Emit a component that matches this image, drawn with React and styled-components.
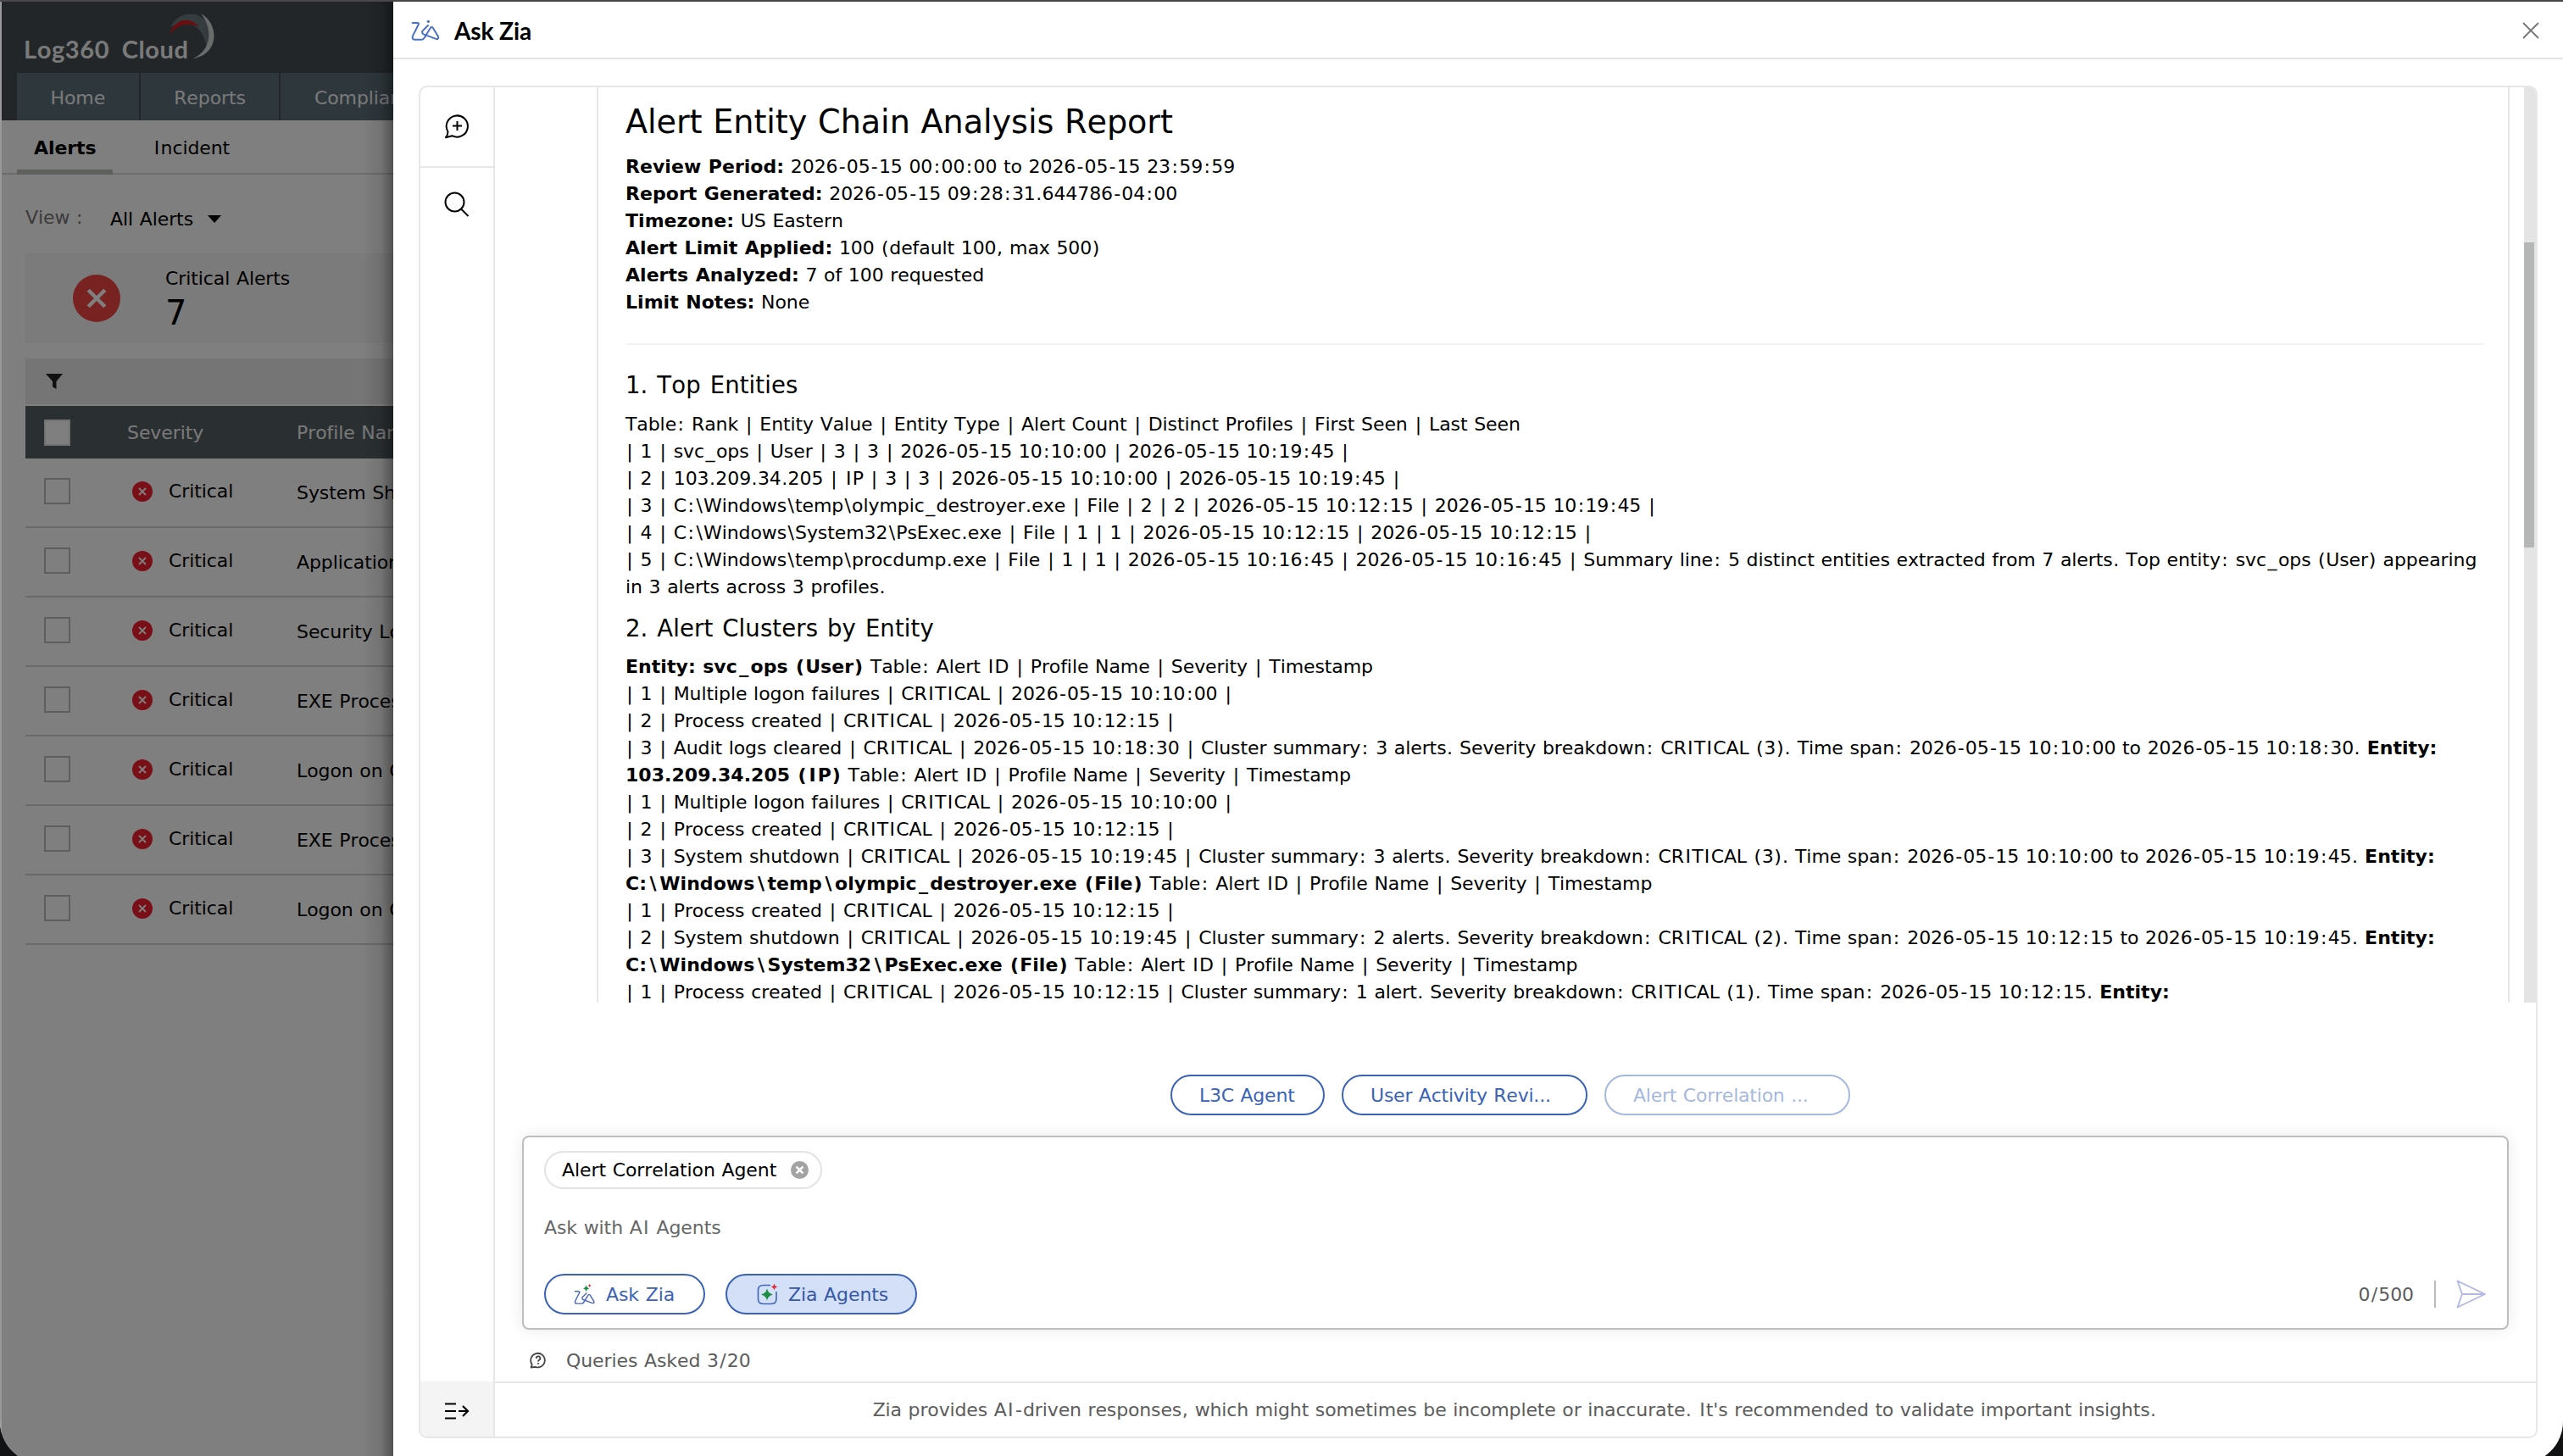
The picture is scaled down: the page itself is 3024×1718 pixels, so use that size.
import React from "react";
import styled, { createGlobalStyle } from "styled-components";

const GlobalStyle = createGlobalStyle`
  * {
    box-sizing: border-box;
  }
  body {
    margin: 0;
    background: #111214;
    font-family: "DejaVu Sans", Verdana, sans-serif;
    font-size: 22px;
    font-kerning: none;
    letter-spacing: -0.004em;
    word-spacing: 0.036em;
    color: #000;
  }
  h1, h2, p {
    margin: 0;
    font-weight: 400;
  }
  svg {
    display: block;
    flex: none;
  }
`;

/* narrow punctuation gets some air on both sides */
const PADS = { "|": 0.058, ":": 0.066, "\\": 0.058, "/": 0.058, "-": 0.056, "(": 0.032, ")": 0.032, ".": 0.022, ",": 0.022, _: 0.068, I: 0.062 };
const BOLD_PADS = { "\\": 0.162, "(": 0.045, ")": 0.045, _: 0.105, I: 0.085 };

const Glyph = styled.span`
  padding: 0 ${p => p.$pad}em;
`;

const T = ({ children, pads = PADS }) =>
  children.split(/([|:\\/\-().,_I])/).map((part, index) => {
    if (pads[part]) {
      return <Glyph key={index} $pad={pads[part]}>{part}</Glyph>;
    }
    return part;
  });

const alerts = [
  "System Shutdown",
  "Application Crash",
  "Security Logs Cleared",
  "EXE Process Created",
  "Logon on Critical Host",
  "EXE Process Created",
  "Logon on Critical Host",
];

const summary = [
  ["Review Period:", " 2026-05-15 00:00:00 to 2026-05-15 23:59:59"],
  ["Report Generated:", " 2026-05-15 09:28:31.644786-04:00"],
  ["Timezone:", " US Eastern"],
  ["Alert Limit Applied:", " 100 (default 100, max 500)"],
  ["Alerts Analyzed:", " 7 of 100 requested"],
  ["Limit Notes:", " None"],
];

const entities = [
  "Table: Rank | Entity Value | Entity Type | Alert Count | Distinct Profiles | First Seen | Last Seen",
  "| 1 | svc_ops | User | 3 | 3 | 2026-05-15 10:10:00 | 2026-05-15 10:19:45 |",
  "| 2 | 103.209.34.205 | IP | 3 | 3 | 2026-05-15 10:10:00 | 2026-05-15 10:19:45 |",
  "| 3 | C:\\Windows\\temp\\olympic_destroyer.exe | File | 2 | 2 | 2026-05-15 10:12:15 | 2026-05-15 10:19:45 |",
  "| 4 | C:\\Windows\\System32\\PsExec.exe | File | 1 | 1 | 2026-05-15 10:12:15 | 2026-05-15 10:12:15 |",
  "| 5 | C:\\Windows\\temp\\procdump.exe | File | 1 | 1 | 2026-05-15 10:16:45 | 2026-05-15 10:16:45 | Summary line: 5 distinct entities extracted from 7 alerts. Top entity: svc_ops (User) appearing",
  "in 3 alerts across 3 profiles.",
];

const HEAD = " Table: Alert ID | Profile Name | Severity | Timestamp";

const clusters = [
  { lead: "Entity: svc_ops (User)", text: HEAD },
  { text: "| 1 | Multiple logon failures | CRITICAL | 2026-05-15 10:10:00 |" },
  { text: "| 2 | Process created | CRITICAL | 2026-05-15 10:12:15 |" },
  { text: "| 3 | Audit logs cleared | CRITICAL | 2026-05-15 10:18:30 | Cluster summary: 3 alerts. Severity breakdown: CRITICAL (3). Time span: 2026-05-15 10:10:00 to 2026-05-15 10:18:30. ", tail: "Entity:" },
  { lead: "103.209.34.205 (IP)", text: HEAD },
  { text: "| 1 | Multiple logon failures | CRITICAL | 2026-05-15 10:10:00 |" },
  { text: "| 2 | Process created | CRITICAL | 2026-05-15 10:12:15 |" },
  { text: "| 3 | System shutdown | CRITICAL | 2026-05-15 10:19:45 | Cluster summary: 3 alerts. Severity breakdown: CRITICAL (3). Time span: 2026-05-15 10:10:00 to 2026-05-15 10:19:45. ", tail: "Entity:" },
  { lead: "C:\\Windows\\temp\\olympic_destroyer.exe (File)", text: HEAD },
  { text: "| 1 | Process created | CRITICAL | 2026-05-15 10:12:15 |" },
  { text: "| 2 | System shutdown | CRITICAL | 2026-05-15 10:19:45 | Cluster summary: 2 alerts. Severity breakdown: CRITICAL (2). Time span: 2026-05-15 10:12:15 to 2026-05-15 10:19:45. ", tail: "Entity:" },
  { lead: "C:\\Windows\\System32\\PsExec.exe (File)", text: HEAD },
  { text: "| 1 | Process created | CRITICAL | 2026-05-15 10:12:15 | Cluster summary: 1 alert. Severity breakdown: CRITICAL (1). Time span: 2026-05-15 10:12:15. ", tail: "Entity:" },
];

const Screen = styled.div`
  width: 3024px;
  height: 1718px;
  overflow: hidden;
`;

const Window = styled.div`
  position: relative;
  display: flex;
  height: 1727px;
  padding-top: 2px;
  border-radius: 0 0 50px 50px;
  background: #4a474a;
  overflow: hidden;
`;

/* ---------- alerts page behind the drawer ---------- */

const Page = styled.div`
  position: relative;
  width: 464px;
  border-left: 2px solid #999;
  background: #fff;
  overflow: hidden;
`;

const Dim = styled.div`
  position: absolute;
  inset: 0;
  background: linear-gradient(90deg, transparent calc(100% - 36px), rgba(0, 0, 0, 0.1) calc(100% - 14px), rgba(0, 0, 0, 0.36)), rgba(0, 0, 0, 0.5);
`;

const TopBar = styled.div`
  display: flex;
  flex-direction: column;
  justify-content: space-between;
  height: 140px;
  padding-left: 18px;
  background: #454d51;
  overflow: hidden;
`;

const Brand = styled.div`
  display: flex;
  height: 84px;
  padding: 12px 0 0 8px;
`;

const BrandName = styled.div`
  margin-top: 26px;
  font-family: Lato, sans-serif;
  font-size: 29px;
  font-weight: 700;
  line-height: 36px;
  letter-spacing: 0.6px;
  word-spacing: 7px;
  white-space: nowrap;
  color: #f4f4f4;
`;

const Swoosh = styled.svg`
  margin-left: -24px;
`;

const MainTabs = styled.div`
  display: flex;
  gap: 2px;
  height: 56px;
`;

const MainTab = styled.div`
  padding: 0 39.5px;
  background: #5d6f78;
  line-height: 60px;
  color: #f4f4f4;
`;

const SubTabs = styled.div`
  display: flex;
  gap: 28px;
  height: 64px;
  padding-left: 18px;
  border-bottom: 2px solid #d8d8d8;
`;

const SubTab = styled.div`
  height: 64px;
  padding: 0 ${p => (p.$active ? 20 : 19)}px;
  border-bottom: ${p => (p.$active ? "6px solid #bcc0b6" : "0")};
  font-weight: ${p => (p.$active ? 700 : 400)};
  line-height: 65px;
`;

const ViewRow = styled.div`
  display: flex;
  align-items: center;
  height: 93px;
  padding: 11px 0 0 28px;
`;

const ViewLabel = styled.span`
  width: 100px;
  margin-top: -4px;
  color: #777;
`;

const Caret = styled.span`
  margin-left: 17px;
  border: 8px solid transparent;
  border-top: 9px solid #000;
  border-bottom: 0;
`;

const Card = styled.div`
  display: flex;
  align-items: center;
  height: 105px;
  margin-left: 28px;
  padding-left: 55px;
  background: #f6f6f6;
  border: 1px solid #f0f0f0;
`;

const CardText = styled.div`
  margin-left: 53px;
  padding-top: 2px;
  line-height: 28px;
`;

const CardCount = styled.div`
  margin-top: 4px;
  font-size: 40px;
  line-height: 44px;
`;

const FilterBar = styled.div`
  display: flex;
  align-items: center;
  height: 54px;
  margin: 19px 0 2px 28px;
  padding-left: 24px;
  background: #ebebeb;
`;

const Row = styled.div`
  display: flex;
  align-items: center;
  height: 82px;
  margin-left: 28px;
  padding: 0 0 3px 22px;
  border-bottom: 2px solid #d4d4d4;
  white-space: nowrap;
`;

const HeadRow = styled(Row)`
  height: 62px;
  padding-bottom: 0;
  border: 0;
  background: #555e63;
  color: #f2f2f2;
`;

const Check = styled.span`
  flex: none;
  width: 31px;
  height: 31px;
  border: 2px solid ${p => (p.$head ? "#e4e4e4" : "#bdbdbd")};
  background: #fff;
`;

const Severity = styled.span`
  display: flex;
  align-items: center;
  gap: 19px;
  flex: none;
  width: 194px;
  margin-left: 73px;
`;

const HeadSeverity = styled.span`
  flex: none;
  width: 200px;
  margin-left: 67px;
`;

const Profile = styled.span`
  padding-top: 3px;
`;

/* ---------- drawer ---------- */

const Drawer = styled.div`
  display: flex;
  flex-direction: column;
  flex: 1;
  padding-bottom: 30px;
  background: #fff;
`;

const DrawerHead = styled.div`
  display: flex;
  align-items: center;
  height: 68px;
  padding: 2px 28px 0 21px;
  border-bottom: 2px solid #e4e4e4;
`;

const DrawerTitle = styled.h1`
  flex: 1;
  margin-left: 17px;
  font-family: Lato, sans-serif;
  font-size: 28px;
  font-weight: 700;
  letter-spacing: -0.1px;
  word-spacing: 0;
`;

const Panel = styled.div`
  display: flex;
  height: 1596px;
  margin: 31px 30px 0 30px;
  border: 2px solid #e6e7e7;
  border-radius: 10px;
  overflow: hidden;
`;

const Rail = styled.div`
  display: flex;
  flex-direction: column;
  width: 88px;
  border-right: 2px solid #e6e7e7;
`;

const RailItem = styled.div`
  display: flex;
  align-items: center;
  justify-content: center;
  height: ${p => p.$height}px;
  padding-bottom: 2px;
  border-bottom: ${p => (p.$line ? "2px solid #e6e7e7" : "0")};
`;

const RailFoot = styled(RailItem)`
  margin-top: auto;
  padding-top: 6px;
  background: #f4f4f4;
`;

const Chat = styled.div`
  display: flex;
  flex-direction: column;
  flex: 1;
`;

const Scroller = styled.div`
  display: flex;
  height: 1081px;
  padding-left: 120px;
  overflow: hidden;
`;

const Report = styled.div`
  width: 2257px;
  padding: 15px 29px 0 32px;
  border: 2px solid #e6e7e7;
  border-width: 0 2px;
`;

const ReportTitle = styled.h1`
  font-size: 38.2px;
  line-height: 52px;
`;

const Lines = styled.div`
  margin-top: ${p => p.$gap}px;
`;

const Line = styled.p`
  line-height: 32px;
  white-space: pre;
`;

const Strong = styled.b`
  letter-spacing: 0.002em;
`;

const Rule = styled.div`
  height: 2px;
  margin: 32px 0 29px;
  background: #f3f3f3;
`;

const Heading = styled.h2`
  margin-top: ${p => p.$gap || 0}px;
  font-size: 27.5px;
  line-height: 36px;
  letter-spacing: 0.004em;
  word-spacing: 0.075em;
`;

const Track = styled.div`
  width: 14px;
  margin-left: auto;
  padding-top: 183px;
  background: #e4e4e4;
`;

const Thumb = styled.div`
  width: 12px;
  height: 360px;
  background: #b5b6b6;
`;

const Agents = styled.div`
  display: flex;
  gap: 20px;
  margin: 85px 0 0 797px;
`;

const AgentPill = styled.button`
  width: ${p => p.$width}px;
  height: 48px;
  padding: 0 32px;
  border: 2px solid #3a63b8;
  border-radius: 24px;
  background: #fff;
  font: inherit;
  letter-spacing: -0.01em;
  word-spacing: inherit;
  text-align: left;
  white-space: nowrap;
  color: #3a63b8;
  opacity: ${p => (p.$off ? 0.45 : 1)};
`;

const Composer = styled.div`
  display: flex;
  flex-direction: column;
  width: 2344px;
  height: 229px;
  margin: 24px 0 0 32px;
  padding: 16px 24px 16px 24px;
  border: 2px solid #bdbdbd;
  border-radius: 8px;
  box-shadow: 0 0 18px rgba(0, 0, 0, 0.09);
`;

const Tag = styled.div`
  display: flex;
  align-items: center;
  justify-content: space-between;
  width: 328px;
  height: 45px;
  padding: 0 14px 0 19px;
  border: 2px solid #e3e3e3;
  border-radius: 23px;
`;

const Placeholder = styled.p`
  margin-top: 29px;
  line-height: 34px;
  color: #666;
`;

const ComposerFoot = styled.div`
  display: flex;
  align-items: center;
  gap: 24px;
  margin-top: auto;
`;

const ModeButton = styled.button`
  display: flex;
  align-items: center;
  gap: 12px;
  width: ${p => p.$width}px;
  height: 48px;
  padding: 0 0 0 ${p => (p.$active ? 35 : 33)}px;
  border: 2px solid #3a63b8;
  border-radius: 24px;
  background: ${p => (p.$active ? "#d3e0f8" : "#fff")};
  font: inherit;
  letter-spacing: inherit;
  word-spacing: inherit;
  color: ${p => (p.$active ? "#3557a8" : "#3a63b8")};
`;

const Counter = styled.span`
  margin-left: auto;
  padding: 2px 24px 0 0;
  border-right: 2px solid #bbb;
  line-height: 30px;
  color: #5c5c5c;
`;

const Queries = styled.div`
  display: flex;
  align-items: center;
  gap: 23px;
  height: 61px;
  padding: 11px 0 0 41px;
  color: #5c5c5c;
`;

const Notice = styled.div`
  flex: 1;
  border-top: 2px solid #e6e7e7;
  padding-right: 2px;
  line-height: 63px;
  letter-spacing: -0.006em;
  text-align: center;
  color: #5c5c5c;
`;

const CrossBadge = ({ size, color, cross = "#fff", arm = 4, stroke = 1.8 }) => (
  <svg width={size} height={size} viewBox="0 0 24 24">
    <circle cx="12" cy="12" r="12" fill={color} />
    <path
      d={`M${12 - arm} ${12 - arm}L${12 + arm} ${12 + arm}M${12 + arm} ${12 - arm}L${12 - arm} ${12 + arm}`}
      stroke={cross}
      strokeWidth={stroke}
    />
  </svg>
);

const ziaPath = "M33 36H50Q57 36 54 42L34 82Q30 95 41 95H66Q72 95 75 89L96 55Q100 48 105 53L124 84Q127 96 114 92L72 76Q64 71 69 64L88 45";

const ZiaLogo = () => (
  <svg width="34" height="26" viewBox="28 24 102 78">
    <path d={ziaPath} fill="none" stroke="#4a70c4" strokeWidth="6" strokeLinecap="round" strokeLinejoin="round" />
    <circle cx="89" cy="31" r="5" fill="#4a70c4" />
  </svg>
);

const ZiaSpark = () => (
  <svg width="26" height="24" viewBox="22 28 78 72">
    <g transform="translate(2.5 28) scale(0.73)">
      <path d={ziaPath} fill="none" stroke="#4a66b8" strokeWidth="6" strokeLinecap="round" strokeLinejoin="round" />
    </g>
    <path d="M66 32Q68 42 78 44Q68 46 66 56Q64 46 54 44Q64 42 66 32Z" fill="#1f8f47" />
    <path d="M78 28Q79 33 84 34Q79 35 78 40Q77 35 72 34Q77 33 78 28Z" fill="#d4323c" />
  </svg>
);

const AgentSpark = () => (
  <svg width="25" height="26" viewBox="0 0 25 26">
    <path d="M16 2.5H7.5Q1.5 2.5 1.5 8.500V18.500Q1.500 24.500 7.500 24.500H17Q23 24.500 23 18.500V10" fill="none" stroke="#3f66bb" strokeWidth="1.6" />
    <path d="M12 6.500Q13.300 12.200 19 13.500Q13.300 14.800 12 20.500Q10.700 14.800 5 13.500Q10.700 12.200 12 6.500Z" fill="#1f8f47" />
    <path d="M20.500 .5Q21.200 3.800 24.500 4.500Q21.200 5.200 20.500 8.500Q19.800 5.200 16.500 4.500Q19.800 3.800 20.500 .5Z" fill="#dc3038" />
  </svg>
);

const AlertsPage = () => (
  <Page>
    <TopBar>
      <Brand>
        <BrandName>Log360 Cloud</BrandName>
        <Swoosh width="58" height="58" viewBox="0 0 58 58">
          <path d="M2 18C12 -3 44 -4 50 24C51 34 49 42 45 47C45 26 30 4 2 18Z" fill="#68797e" />
          <path d="M1 27C6 8 26 4 36 18C24 12 11 14 1 27Z" fill="#d31a1e" />
          <path d="M38 2C60 14 60 50 29 55C49 46 54 22 38 2Z" fill="#d5d8d9" />
        </Swoosh>
      </Brand>
      <MainTabs>
        <MainTab>Home</MainTab>
        <MainTab>Reports</MainTab>
        <MainTab>Compliance</MainTab>
      </MainTabs>
    </TopBar>
    <SubTabs>
      <SubTab $active>Alerts</SubTab>
      <SubTab><T>Incident</T></SubTab>
    </SubTabs>
    <ViewRow>
      <ViewLabel>View :</ViewLabel>
      All Alerts
      <Caret />
    </ViewRow>
    <Card>
      <CrossBadge size={56} color="#f04444" arm={4.2} stroke={1.9} />
      <CardText>
        Critical Alerts
        <CardCount>7</CardCount>
      </CardText>
    </Card>
    <FilterBar>
      <svg width="20" height="18" viewBox="0 0 20 18">
        <path d="M0 0H20L12.500 9V18L8 15.500V9Z" fill="#222" />
      </svg>
    </FilterBar>
    <HeadRow>
      <Check $head />
      <HeadSeverity>Severity</HeadSeverity>
      <span>Profile Name</span>
    </HeadRow>
    {alerts.map((name, index) => (
      <Row key={index}>
        <Check />
        <Severity>
          <CrossBadge size={24} color="#f5202f" />
          Critical
        </Severity>
        <Profile>{name}</Profile>
      </Row>
    ))}
    <Dim />
  </Page>
);

const ReportView = () => (
  <Scroller>
    <Report>
      <ReportTitle>Alert Entity Chain Analysis Report</ReportTitle>
      <Lines $gap={11}>
        {summary.map(([label, value]) => (
          <Line key={label}>
            <Strong>{label}</Strong>
            <T>{value}</T>
          </Line>
        ))}
      </Lines>
      <Rule />
      <Heading>1. Top Entities</Heading>
      <Lines $gap={13}>
        {entities.map(text => (
          <Line key={text}><T>{text}</T></Line>
        ))}
      </Lines>
      <Heading $gap={14}>2. Alert Clusters by Entity</Heading>
      <Lines $gap={12}>
        {clusters.map((item, index) => (
          <Line key={index}>
            {item.lead && <Strong><T pads={BOLD_PADS}>{item.lead}</T></Strong>}
            <T>{item.text}</T>
            {item.tail && <Strong>{item.tail}</Strong>}
          </Line>
        ))}
      </Lines>
    </Report>
    <Track>
      <Thumb />
    </Track>
  </Scroller>
);

const AskBox = () => (
  <Composer>
    <Tag>
      Alert Correlation Agent
      <CrossBadge size={21} color="#a3a3a3" arm={4.5} stroke={3} />
    </Tag>
    <Placeholder><T>Ask with AI Agents</T></Placeholder>
    <ComposerFoot>
      <ModeButton $width={190}>
        <ZiaSpark />
        Ask Zia
      </ModeButton>
      <ModeButton $width={226} $active>
        <AgentSpark />
        Zia Agents
      </ModeButton>
      <Counter><T>0/500</T></Counter>
      <svg width="36" height="34" viewBox="0 0 36 34">
        <path d="M1.500 1.500L34 17L1.500 32.500L7 17ZM7 17H34" fill="none" stroke="#b3b9e4" strokeWidth="1.900" strokeLinejoin="round" />
      </svg>
    </ComposerFoot>
  </Composer>
);

const App = () => (
  <Screen>
    <GlobalStyle />
    <Window>
      <AlertsPage />
      <Drawer>
        <DrawerHead>
          <ZiaLogo />
          <DrawerTitle>Ask Zia</DrawerTitle>
          <svg width="20" height="20" viewBox="0 0 20 20">
            <path d="M1 1L19 19M19 1L1 19" stroke="#777" strokeWidth="1.800" />
          </svg>
        </DrawerHead>
        <Panel>
          <Rail>
            <RailItem $height={95} $line>
              <svg width="30" height="30" viewBox="0 0 30 30" fill="none" stroke="#000" strokeWidth="2">
                <path d="M4.500 21.500A12.600 12.600 0 1 1 9.500 26.200L2 28.200Q4.500 25 4.500 21.500Z" strokeLinejoin="round" />
                <path d="M10 14.500H21M15.500 9V20" />
              </svg>
            </RailItem>
            <RailItem $height={88}>
              <svg width="30" height="30" viewBox="0 0 30 30" fill="none" stroke="#000" strokeWidth="2">
                <circle cx="12.500" cy="12.500" r="11" />
                <path d="M20 20.500L28.500 29" />
              </svg>
            </RailItem>
            <RailFoot $height={65}>
              <svg width="30" height="22" viewBox="0 0 30 22" fill="none" stroke="#000" strokeWidth="2.200">
                <path d="M1 2.500H14M1 11H14M1 19.500H14M17 11H28M22 5L28 11L22 17" />
              </svg>
            </RailFoot>
          </Rail>
          <Chat>
            <ReportView />
            <Agents>
              <AgentPill $width={182}>L3C Agent</AgentPill>
              <AgentPill $width={290}>User Activity Revi...</AgentPill>
              <AgentPill $width={290} $off>Alert Correlation ...</AgentPill>
            </Agents>
            <AskBox />
            <Queries>
              <svg width="20" height="20" viewBox="0 0 20 20" fill="none" stroke="#444" strokeWidth="1.800">
                <path d="M2.500 14.500A8.300 8.300 0 1 1 6.500 17.800L1.500 18.500Q2.800 16.500 2.500 14.500Z" strokeLinejoin="round" />
                <path d="M7.800 8A2.300 2.300 0 1 1 11 9.800Q10 10.400 10 11.500M10 13V14.800" />
              </svg>
              <span><T>Queries Asked 3/20</T></span>
            </Queries>
            <Notice>
              <T>Zia provides AI-driven responses, which might sometimes be incomplete or inaccurate. It's recommended to validate important insights.</T>
            </Notice>
          </Chat>
        </Panel>
      </Drawer>
    </Window>
  </Screen>
);

export default App;
